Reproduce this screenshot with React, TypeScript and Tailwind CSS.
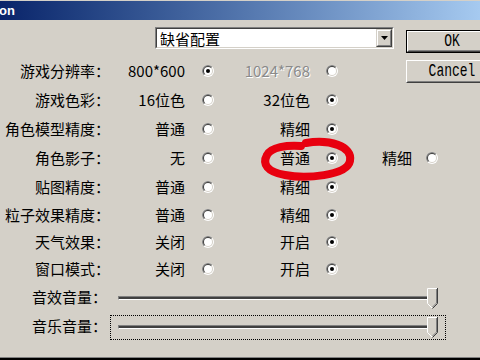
import React from "react";

const CJK = "font-['Noto_Sans_CJK_SC','Noto_Sans_CJK_JP',sans-serif]";

type Opt = { text: string; checked: boolean; disabled?: boolean };
type Row = { label: string; opts: Opt[]; h: string };

const topRows: Row[] = [
  {
    label: "游戏分辨率：",
    opts: [
      { text: "800*600", checked: true },
      { text: "1024*768", checked: false, disabled: true },
    ],
    h: "h-[29px]",
  },
  {
    label: "游戏色彩：",
    opts: [
      { text: "16位色", checked: false },
      { text: "32位色", checked: true },
    ],
    h: "h-[29px]",
  },
];

const rows: Row[] = [
  {
    label: "角色模型精度：",
    opts: [
      { text: "普通", checked: false },
      { text: "精细", checked: true },
    ],
    h: "h-[29px]",
  },
  {
    label: "角色影子：",
    opts: [
      { text: "无", checked: false },
      { text: "普通", checked: true },
      { text: "精细", checked: false },
    ],
    h: "h-[29px]",
  },
  {
    label: "贴图精度：",
    opts: [
      { text: "普通", checked: false },
      { text: "精细", checked: true },
    ],
    h: "h-[29px]",
  },
  {
    label: "粒子效果精度：",
    opts: [
      { text: "普通", checked: false },
      { text: "精细", checked: true },
    ],
    h: "h-[27px]",
  },
  {
    label: "天气效果：",
    opts: [
      { text: "关闭", checked: false },
      { text: "开启", checked: true },
    ],
    h: "h-[27px]",
  },
  {
    label: "窗口模式：",
    opts: [
      { text: "关闭", checked: false },
      { text: "开启", checked: true },
    ],
    h: "h-[27px]",
  },
];

function Radio({ checked }: { checked: boolean }) {
  return (
    <svg width="12" height="12" viewBox="0 0 12 12" className="block">
      <circle cx="6" cy="6" r="6" fill="#ffffff" />
      <path d="M1.757 10.243A6 6 0 0 1 10.243 1.757Z" fill="#808080" />
      <circle cx="6" cy="6" r="5" fill="#d4d0c8" />
      <path d="M2.464 9.536A5 5 0 0 1 9.536 2.464Z" fill="#404040" />
      <circle cx="6" cy="6" r="4" fill="#ffffff" />
      {checked && <circle cx="6" cy="6" r="2" fill="#000000" />}
    </svg>
  );
}

function OptionRow({ row }: { row: Row }) {
  const [a, b, c] = row.opts;
  return (
    <div
      className={`grid grid-cols-[110px_75px_46px_79px_44px_58px_40px] items-center ${row.h}`}
    >
      <span className="text-right">{row.label}</span>
      <span className="text-right">{a.text}</span>
      <span className="flex justify-center">
        <Radio checked={a.checked} />
      </span>
      <span
        className={`text-right ${b.disabled ? "text-[#8a8a8a] [text-shadow:1px_1px_0_#ffffff]" : ""}`}
      >
        {b.text}
      </span>
      <span className="flex justify-center">
        <Radio checked={b.checked} />
      </span>
      {c ? (
        <>
          <span className="text-right">{c.text}</span>
          <span className="flex justify-center">
            <Radio checked={c.checked} />
          </span>
        </>
      ) : null}
    </div>
  );
}

function Thumb() {
  return (
    <svg width="11" height="21" viewBox="0 0 11 21" className="block">
      <polygon points="0,0 11,0 11,15.5 5.5,21 0,15.5" fill="#d4d0c8" />
      <polyline points="0.5,15.5 0.5,0.5 10,0.5" fill="none" stroke="#ffffff" />
      <line x1="0.5" y1="15.5" x2="5" y2="20" stroke="#ffffff" />
      <polyline points="10.5,0 10.5,15.5 5.5,20.5" fill="none" stroke="#404040" />
      <polyline points="9.5,1 9.5,15 5.5,19" fill="none" stroke="#808080" />
    </svg>
  );
}

function SliderRow({ label, focused }: { label: string; focused?: boolean }) {
  return (
    <div className="flex items-start h-[29px]">
      <span className="w-[110px] h-[29px] pr-[3px] flex items-center justify-end">{label}</span>
      <div
        className={`relative mt-[4px] h-[25px] w-[336px] px-[7px] pt-[9px] border border-dotted ${
          focused ? "border-black" : "border-transparent"
        }`}
      >
        <div className="h-[4px] border border-t-[#808080] border-l-[#808080] border-b-white border-r-white bg-[#404040]" />
        <div className="absolute right-[7px] top-[1px]">
          <Thumb />
        </div>
      </div>
    </div>
  );
}

function Combo() {
  return (
    <div className="w-[239px] h-[22px] border border-t-[#808080] border-l-[#808080] border-b-white border-r-white">
      <div className="h-full flex border border-t-[#404040] border-l-[#404040] border-b-[#d4d0c8] border-r-[#d4d0c8] bg-white">
        <span className="flex-1 pl-[3px] flex items-center text-[15px]">缺省配置</span>
        <div className="w-[16px] h-full border border-t-[#d4d0c8] border-l-[#d4d0c8] border-b-[#404040] border-r-[#404040] bg-[#d4d0c8]">
          <div className="h-full flex items-center justify-center border border-t-white border-l-white border-b-[#808080] border-r-[#808080]">
            <svg width="7" height="4" viewBox="0 0 7 4">
              <polygon points="0,0 7,0 3.5,4" fill="#000000" />
            </svg>
          </div>
        </div>
      </div>
    </div>
  );
}

function Button({ label, isDefault }: { label: string; isDefault?: boolean }) {
  const inner = (
    <div className="h-full border border-t-white border-l-white border-b-[#404040] border-r-[#404040]">
      <div className="h-full flex items-center justify-center border border-t-[#d4d0c8] border-l-[#d4d0c8] border-b-[#808080] border-r-[#808080] font-['Liberation_Mono',monospace] text-[13px]">
        <span className="inline-block scale-y-[1.35]">{label}</span>
      </div>
    </div>
  );
  return (
    <div className={`w-[92px] h-[23px] shrink-0 ${isDefault ? "border border-black" : ""}`}>
      {inner}
    </div>
  );
}

export default function App() {
  return (
    <div
      className={`relative w-[480px] h-[360px] overflow-hidden bg-[#d4d0c8] text-black text-[15px] leading-none flex flex-col pt-[1px] ${CJK}`}
    >
      {/* title bar */}
      <div className="h-[19px] shrink-0 bg-gradient-to-r from-[#0a246a] to-[#a6caf0] flex items-center">
        <span className="ml-[-1px] text-white font-bold text-[13px] font-['Liberation_Sans',sans-serif]">
          on
        </span>
      </div>

      {/* top block: combo + first rows, buttons on right */}
      <div className="flex shrink-0">
        <div className="w-[406px] shrink-0 flex flex-col">
          <div className="h-[36px] pt-[7px] pl-[155px]">
            <Combo />
          </div>
          {topRows.map((r) => (
            <OptionRow key={r.label} row={r} />
          ))}
        </div>
        <div className="flex flex-col gap-[7px] pt-[10px]">
          <Button label="OK" isDefault />
          <Button label="Cancel" />
        </div>
      </div>

      {rows.map((r) => (
        <OptionRow key={r.label} row={r} />
      ))}

      <SliderRow label="音效音量：" />
      <SliderRow label="音乐音量：" focused />

      <div className="flex-1" />
      <div className="h-[1px] bg-[#808080] shrink-0" />
      <div className="h-[2px] bg-black shrink-0" />

      {/* red hand-drawn mark */}
      <svg
        className="absolute left-[256px] top-[132px] pointer-events-none"
        width="104"
        height="56"
        viewBox="0 0 104 56"
      >
        <path
          d="M50,11 C73,7 97,14 94,29 C91,44 49,47 29,43 C11,40 6,32 11,23 C15,15 31,13 45,14"
          fill="none"
          stroke="#e8000f"
          strokeWidth="8"
          strokeLinecap="round"
        />
      </svg>
    </div>
  );
}
